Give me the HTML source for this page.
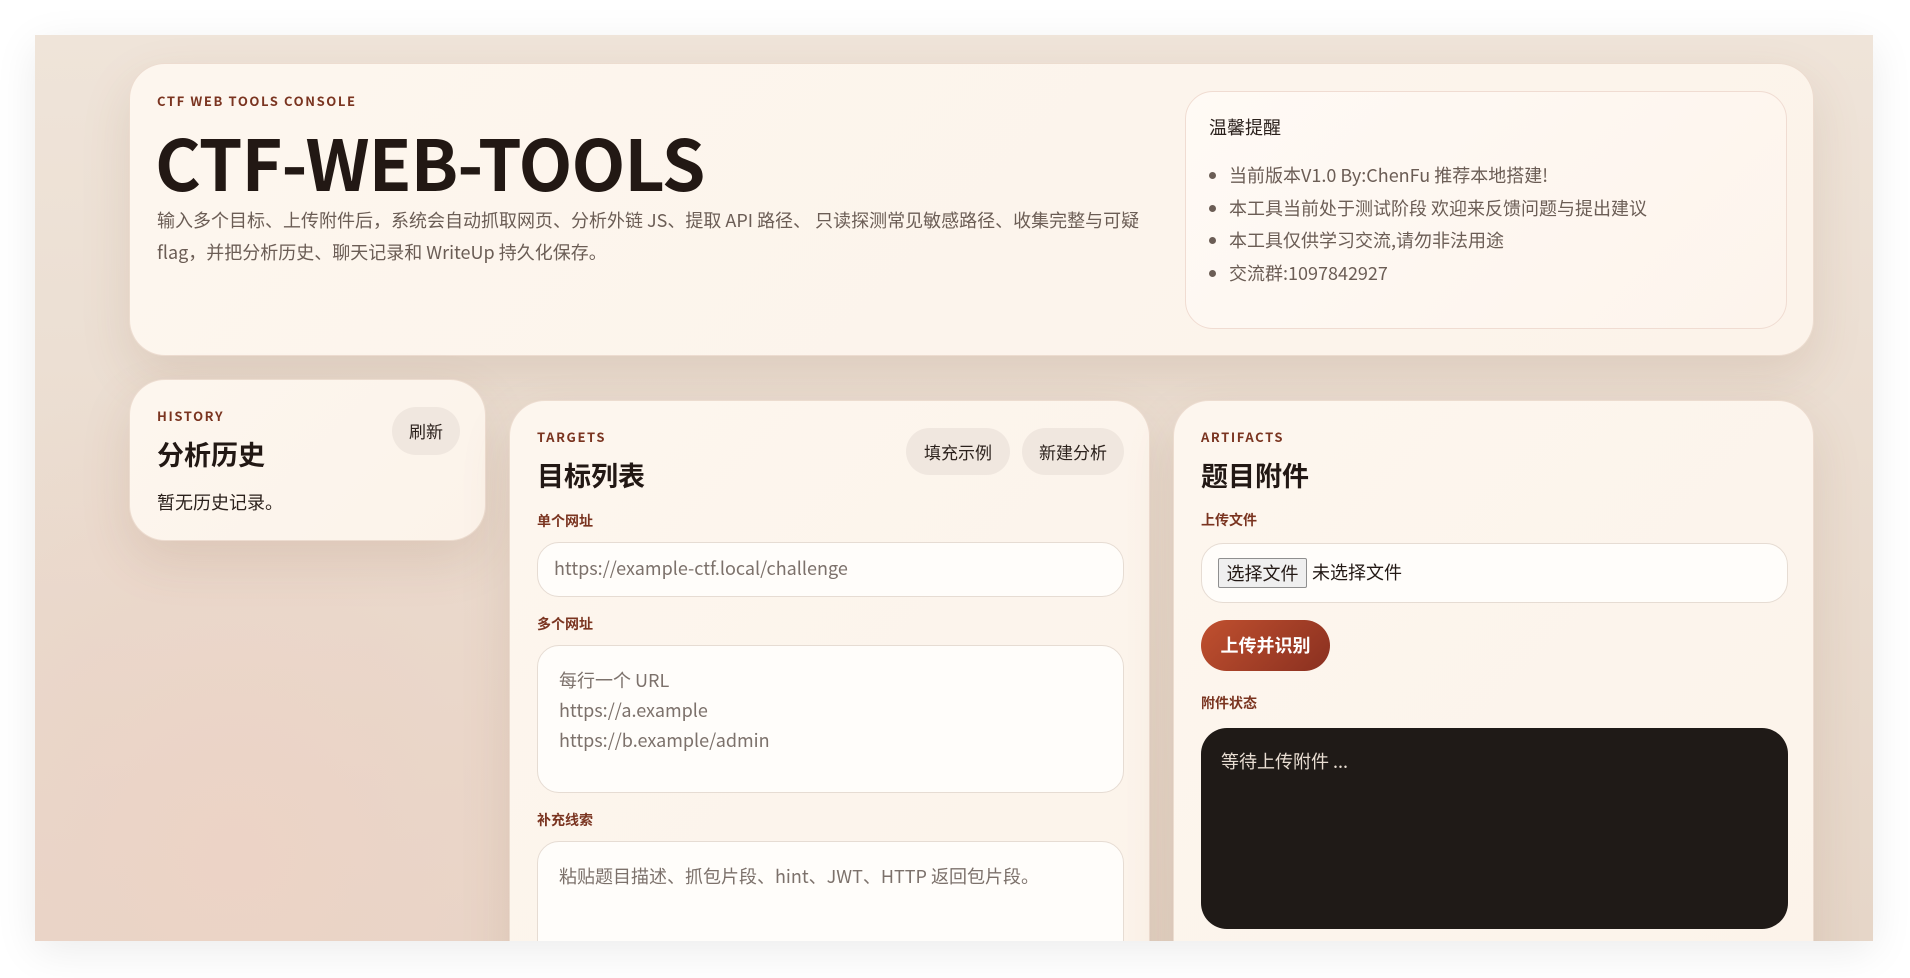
<!DOCTYPE html>
<html><head><meta charset="utf-8"><style>
*{box-sizing:border-box;margin:0;padding:0}
body{width:1910px;height:978px;background:#fff;font-family:"Noto Sans CJK SC","Liberation Sans",sans-serif;line-height:1.15;position:relative;overflow:hidden}
.frame{position:absolute;left:35px;top:35px;width:1838px;height:906px;overflow:hidden;
background:radial-gradient(ellipse 500px 500px at 200px 820px,#ecd3c6 0%,rgba(236,211,198,0) 100%),linear-gradient(180deg,#efe4d9,#e6d6c8);box-shadow:0 10px 40px rgba(0,0,0,.08)}
.card{position:absolute;background:linear-gradient(135deg,#fdf6ee,#fcf3ea);border-radius:36px;box-shadow:0 20px 50px rgba(120,80,50,.13);border:1px solid rgba(230,210,195,.7)}
.eye{font-size:13px;font-weight:bold;letter-spacing:1.6px;color:#7a3420;position:absolute}
.h2{position:absolute;font-size:27px;font-weight:bold;color:#221814}
.lbl{position:absolute;font-size:14px;font-weight:bold;color:#7a3420}
.pill{position:absolute;background:#f0e7df;border-radius:24px;font-size:17px;color:#2b211c;display:flex;align-items:center;justify-content:center}
.inp{position:absolute;background:#fffdfa;border:1px solid #e6dcd3;border-radius:22px;font-size:18px;color:#7c716b}
</style></head><body>
<div class="frame">
 <div class="card" style="left:94px;top:28px;width:1685px;height:293px">
  <div class="eye" style="left:27px;top:30px">CTF WEB TOOLS CONSOLE</div>
  <div style="position:absolute;left:25px;top:58px;font-size:70px;font-weight:bold;color:#221814;letter-spacing:-1px">CTF-WEB-TOOLS</div>
  <div style="position:absolute;left:27px;top:140px;width:1000px;font-size:18px;line-height:32px;color:#6b5d55">输入多个目标、上传附件后，系统会自动抓取网页、分析外链 JS、提取 API 路径、 只读探测常见敏感路径、收集完整与可疑 flag，并把分析历史、聊天记录和 WriteUp 持久化保存。</div>
  <div style="position:absolute;left:1055px;top:27px;width:602px;height:238px;border:1px solid #f0dcd2;border-radius:28px;background:linear-gradient(135deg,#fffaf5,#fdf4ec)">
   <div style="position:absolute;left:23px;top:25px;font-size:18px;color:#2b211c">温馨提醒</div>
   <ul style="position:absolute;left:43px;top:67px;font-size:18px;line-height:32.5px;color:#6b5d55">
    <li>当前版本V1.0 By:ChenFu 推荐本地搭建!</li>
    <li>本工具当前处于测试阶段 欢迎来反馈问题与提出建议</li>
    <li>本工具仅供学习交流,请勿非法用途</li>
    <li>交流群:1097842927</li>
   </ul>
  </div>
 </div>
 <div class="card" style="left:94px;top:344px;width:357px;height:162px">
  <div class="eye" style="left:27px;top:29px">HISTORY</div>
  <div class="h2" style="left:27px;top:58px">分析历史</div>
  <div style="position:absolute;left:27px;top:112px;font-size:18px;color:#2b211c">暂无历史记录。</div>
  <div class="pill" style="left:262px;top:27px;width:68px;height:48px">刷新</div>
 </div>
 <div class="card" style="left:474px;top:365px;width:641px;height:620px">
  <div class="eye" style="left:27px;top:29px">TARGETS</div>
  <div class="h2" style="left:27px;top:58px">目标列表</div>
  <div class="pill" style="left:396px;top:27px;width:104px;height:47px">填充示例</div>
  <div class="pill" style="left:512px;top:27px;width:102px;height:47px">新建分析</div>
  <div class="lbl" style="left:27px;top:112px">单个网址</div>
  <div class="inp" style="left:27px;top:141px;width:587px;height:55px;padding:15px 16px">https://example-ctf.local/challenge</div>
  <div class="lbl" style="left:27px;top:215px">多个网址</div>
  <div class="inp" style="left:27px;top:244px;width:587px;height:148px;padding:19px 21px;line-height:30px">每行一个 URL<br>https://a.example<br>https://b.example/admin</div>
  <div class="lbl" style="left:27px;top:411px">补充线索</div>
  <div class="inp" style="left:27px;top:440px;width:587px;height:160px;padding:19px 21px;line-height:30px">粘贴题目描述、抓包片段、hint、JWT、HTTP 返回包片段。</div>
 </div>
 <div class="card" style="left:1138px;top:365px;width:641px;height:620px">
  <div class="eye" style="left:27px;top:29px">ARTIFACTS</div>
  <div class="h2" style="left:27px;top:58px">题目附件</div>
  <div class="lbl" style="left:27px;top:111px">上传文件</div>
  <div class="inp" style="left:27px;top:142px;width:587px;height:60px;color:#221814">
   <span style="position:absolute;left:16px;top:14px;width:89px;height:30px;border:1px solid #8f8f8f;border-radius:2px;background:#efefef;font-size:18px;text-align:center;line-height:28px">选择文件</span>
   <span style="position:absolute;left:110px;top:18px">未选择文件</span>
  </div>
  <div style="position:absolute;left:27px;top:219px;width:129px;height:51px;border-radius:26px;background:linear-gradient(135deg,#c0502f,#8a3020);color:#fff;font-size:18px;font-weight:bold;display:flex;align-items:center;justify-content:center">上传并识别</div>
  <div class="lbl" style="left:27px;top:294px">附件状态</div>
  <div style="position:absolute;left:27px;top:327px;width:587px;height:201px;border-radius:26px;background:#1f1a17;color:#e8ddd2;font-size:18px;padding:23px 20px">等待上传附件 ...</div>
 </div>
</div>
</body></html>
